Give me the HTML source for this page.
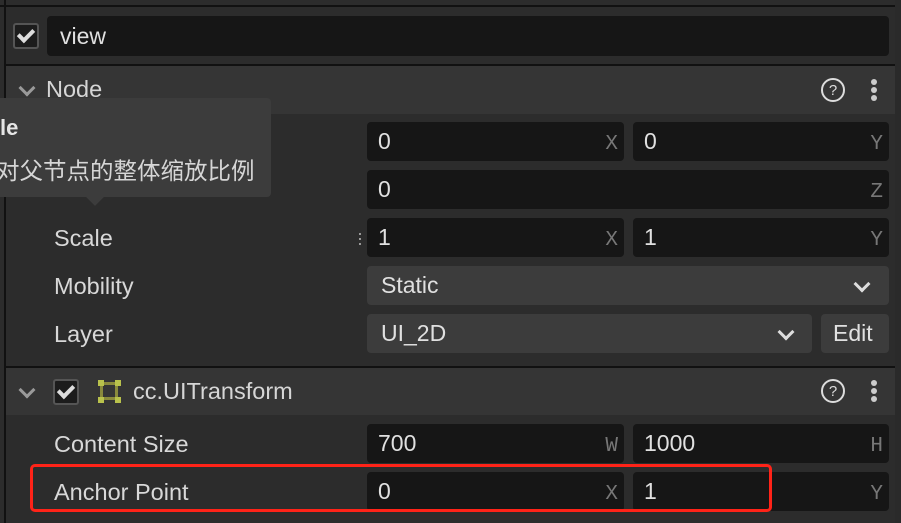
<!DOCTYPE html><html><head><meta charset="utf-8"><style>
body{margin:0;width:901px;height:523px;overflow:hidden;background:#2c2c2c;font-family:"Liberation Sans","Noto Sans CJK SC",sans-serif;color:#d6d6d6;position:relative}
.a{position:absolute}
.inp{position:absolute;background:#161616;border-radius:4px;height:39px;font-size:23px;line-height:39px;box-sizing:border-box;padding-left:11px;color:#e0e0e0}
.inp i{position:absolute;right:6px;top:3px;font-style:normal;font-family:"Liberation Mono",monospace;color:#777;font-size:21px}
.sel{position:absolute;background:#3c3c3c;border-radius:4px;height:39px;font-size:23px;line-height:39px;box-sizing:border-box;padding-left:14px;color:#e0e0e0}
.lbl{position:absolute;left:54px;font-size:23.5px;color:#d8d8d8}
.hdr{position:absolute;left:6px;right:6px;background:#353535}
.chev{position:absolute;width:9px;height:9px;border-right:3px solid #9a9a9a;border-bottom:3px solid #9a9a9a;transform:rotate(45deg)}
.chevw{position:absolute;width:9px;height:9px;border-right:3px solid #ddd;border-bottom:3px solid #ddd;transform:rotate(45deg)}
.cb{position:absolute;width:24px;height:24px;border:2px solid #555;border-radius:3px;background:#1c1c1c;box-sizing:border-box}
.cb:after{content:"";position:absolute;left:6px;top:1px;width:6px;height:12px;border-right:4px solid #ddd;border-bottom:4px solid #ddd;transform:rotate(45deg)}
.help{position:absolute;width:24px;height:24px;border:2px solid #ddd;border-radius:50%;box-sizing:border-box;text-align:center;font-size:15px;line-height:21px;color:#ddd}
.dots{position:absolute;width:6px}
.dots b{display:block;width:6px;height:6px;border-radius:50%;background:#ccc;margin-bottom:2px}
</style></head><body>
<div class="a" style="left:0;top:5px;width:895px;height:2px;background:#111"></div>
<div class="a" style="left:4px;top:0;width:2px;height:523px;background:#111"></div>
<div class="a" style="left:895px;top:0;width:6px;height:523px;background:#2a2a2a"></div>
<div class="cb" style="left:13px;top:23px;width:26px;height:26px"></div>
<div class="inp" style="left:47px;top:16px;width:842px;height:40px;line-height:40px;padding-left:13px">view</div>
<div class="a" style="left:6px;top:64px;width:889px;height:2px;background:#111"></div>
<div class="hdr" style="top:66px;height:48px"></div>
<div class="chev" style="left:21px;top:82px"></div>
<div class="a" style="left:46px;top:76px;font-size:23.5px">Node</div>
<div class="help" style="left:821px;top:78px">?</div>
<div class="dots" style="left:871px;top:79px"><b></b><b></b><b></b></div>

<div class="inp" style="left:367px;top:122px;width:257px">0<i>X</i></div>
<div class="inp" style="left:633px;top:122px;width:256px">0<i>Y</i></div>
<div class="inp" style="left:367px;top:170px;width:522px">0<i>Z</i></div>
<div class="lbl" style="top:225px">Scale</div>
<div class="a" style="left:357px;top:231px;color:#aaa;font-size:18px;line-height:5px">·<br>·<br>·</div>
<div class="inp" style="left:367px;top:218px;width:257px">1<i>X</i></div>
<div class="inp" style="left:633px;top:218px;width:256px">1<i>Y</i></div>
<div class="lbl" style="top:273px">Mobility</div>
<div class="sel" style="left:367px;top:266px;width:522px">Static</div>
<div class="chevw" style="left:856px;top:278px"></div>
<div class="lbl" style="top:321px">Layer</div>
<div class="sel" style="left:367px;top:314px;width:445px">UI_2D</div>
<div class="chevw" style="left:780px;top:326px"></div>
<div class="sel" style="left:821px;top:314px;width:68px;padding-left:12px">Edit</div>

<div class="a" style="left:6px;top:366px;width:889px;height:2px;background:#111"></div>
<div class="hdr" style="top:368px;height:47px"></div>
<div class="chev" style="left:21px;top:384px"></div>
<div class="cb" style="left:53px;top:379px;width:26px;height:26px"></div>
<div class="a" style="left:100px;top:382px;width:18px;height:18px;border:3px solid #8a8a3c;box-sizing:border-box"></div>
<div class="a" style="left:98px;top:380px;width:6px;height:6px;background:#b9c24c"></div>
<div class="a" style="left:115px;top:380px;width:6px;height:6px;background:#b9c24c"></div>
<div class="a" style="left:98px;top:397px;width:6px;height:6px;background:#b9c24c"></div>
<div class="a" style="left:115px;top:397px;width:6px;height:6px;background:#b9c24c"></div>
<div class="a" style="left:133px;top:378px;font-size:23.5px">cc.UITransform</div>
<div class="help" style="left:821px;top:379px">?</div>
<div class="dots" style="left:871px;top:380px"><b></b><b></b><b></b></div>

<div class="lbl" style="top:431px">Content Size</div>
<div class="inp" style="left:367px;top:424px;width:257px">700<i>W</i></div>
<div class="inp" style="left:633px;top:424px;width:256px">1000<i>H</i></div>
<div class="lbl" style="top:479px">Anchor Point</div>
<div class="inp" style="left:367px;top:472px;width:257px">0<i>X</i></div>
<div class="inp" style="left:633px;top:472px;width:256px">1<i>Y</i></div>
<div class="a" style="left:30px;top:464px;width:742px;height:48px;border:3px solid #ff2318;border-radius:5px;box-sizing:border-box"></div>

<div class="a" style="left:0;top:98px;width:271px;height:99px;background:#3c3c3c;border-radius:0 4px 4px 0"></div>
<div class="a" style="left:88px;top:189px;width:14px;height:14px;background:#3c3c3c;transform:rotate(45deg)"></div>
<div class="a" style="left:0;top:115px;font-size:22px;font-weight:bold;color:#e6e6e6">le</div>
<div class="a" style="left:-4px;top:152px;font-size:23.5px;color:#d6d6d6;white-space:nowrap">对父节点的整体缩放比例</div>
</body></html>
